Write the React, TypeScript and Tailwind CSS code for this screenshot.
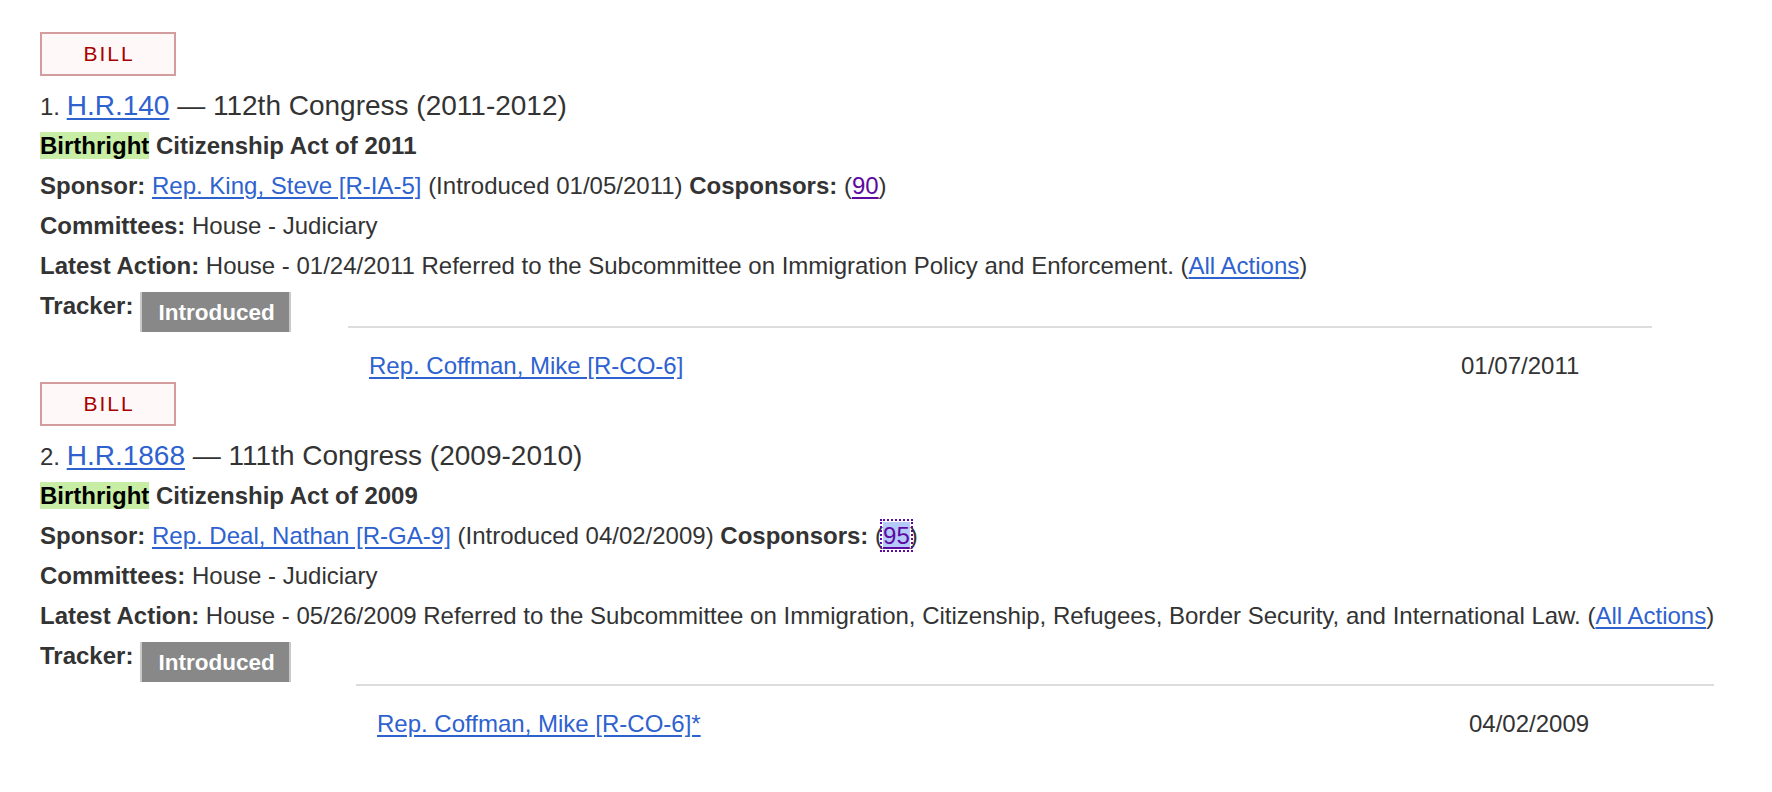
import React from 'react';

type Result = {
  n: number;
  bill: string;
  congress: string;
  title: string;
  sponsor: string;
  introduced: string;
  cosponsors: string;
  focused: boolean;
  latest: string;
  cosponsor: string;
  cosponsorDate: string;
  trackerRow: string;
  table: string;
};

const results: Result[] = [
  {
    n: 1,
    bill: 'H.R.140',
    congress: '112th Congress (2011-2012)',
    title: 'Citizenship Act of 2011',
    sponsor: 'Rep. King, Steve [R-IA-5]',
    introduced: '01/05/2011',
    cosponsors: '90',
    focused: false,
    latest: 'House - 01/24/2011 Referred to the Subcommittee on Immigration Policy and Enforcement.',
    cosponsor: 'Rep. Coffman, Mike [R-CO-6]',
    cosponsorDate: '01/07/2011',
    trackerRow: 'h-[40px]',
    table: 'ml-[308px] w-[1304px]',
  },
  {
    n: 2,
    bill: 'H.R.1868',
    congress: '111th Congress (2009-2010)',
    title: 'Citizenship Act of 2009',
    sponsor: 'Rep. Deal, Nathan [R-GA-9]',
    introduced: '04/02/2009',
    cosponsors: '95',
    focused: true,
    latest:
      'House - 05/26/2009 Referred to the Subcommittee on Immigration, Citizenship, Refugees, Border Security, and International Law.',
    cosponsor: 'Rep. Coffman, Mike [R-CO-6]*',
    cosponsorDate: '04/02/2009',
    trackerRow: 'h-[48px]',
    table: 'ml-[316px] w-[1358px]',
  },
];

const link = 'text-[#2e62cf] underline underline-offset-[3px]';

function ResultItem({ r }: { r: Result }) {
  return (
    <li>
      <div className="flex h-[44px] w-[136px] items-center justify-center border-2 border-[#d49c9c] bg-[#fff8f8] pl-[2px] text-[21px] tracking-[2px] text-[#a80000]">
        BILL
      </div>

      <div className="mt-[10px] h-[40px] whitespace-nowrap text-[28px] leading-[40px] text-[#333]">
        <span className="text-[24px]">{r.n}. </span>
        <a href="#" className={link}>
          {r.bill}
        </a>{' '}
        — {r.congress}
      </div>

      <div className="h-[40px] whitespace-nowrap font-bold leading-[40px]">
        <span className="bg-[#c8eda4] text-black">Birthright</span> {r.title}
      </div>

      <div className="h-[40px] whitespace-nowrap leading-[40px]">
        <b>Sponsor:</b>{' '}
        <a href="#" className={link}>
          {r.sponsor}
        </a>{' '}
        (Introduced {r.introduced}) <b>Cosponsors:</b> (
        {r.focused ? (
          <a
            href="#"
            className="bg-[#b5cafb] text-[#5c0aa0] underline underline-offset-[3px] outline-2 outline-offset-[1px] outline-dotted outline-[#5c0aa0]"
          >
            {r.cosponsors}
          </a>
        ) : (
          <a href="#" className="text-[#5c0aa0] underline underline-offset-[3px]">
            {r.cosponsors}
          </a>
        )}
        )
      </div>

      <div className="h-[40px] whitespace-nowrap leading-[40px]">
        <b>Committees:</b> House - Judiciary
      </div>

      <div className="h-[40px] whitespace-nowrap leading-[40px]">
        <b>Latest Action:</b> {r.latest} (
        <a href="#" className={link}>
          All Actions
        </a>
        )
      </div>

      <div className={`flex items-start ${r.trackerRow}`}>
        <b className="leading-[40px]">Tracker:</b>
        <span className="ml-[7px] mt-[6px] h-[40px] border-x-2 border-[#c9c9c9] bg-[#888] pl-[16px] pr-[14px] text-[22.5px] font-bold leading-[41px] text-white">
          Introduced
        </span>
      </div>

      <div className={r.table}>
        <div className="h-[2px] bg-[#dcdcdc]" />
        <div className="flex pt-[21px] leading-[33px]">
          <div className="w-[1113px] pl-[21px]">
            <a href="#" className={link}>
              {r.cosponsor}
            </a>
          </div>
          <div>{r.cosponsorDate}</div>
        </div>
      </div>
    </li>
  );
}

export default function App() {
  return (
    <div className="min-h-[792px] bg-white pl-[40px] pt-[32px] font-['Liberation_Sans',Arial,sans-serif] text-[24px] text-[#333]">
      <ol>
        {results.map((r) => (
          <ResultItem key={r.bill} r={r} />
        ))}
      </ol>
    </div>
  );
}
